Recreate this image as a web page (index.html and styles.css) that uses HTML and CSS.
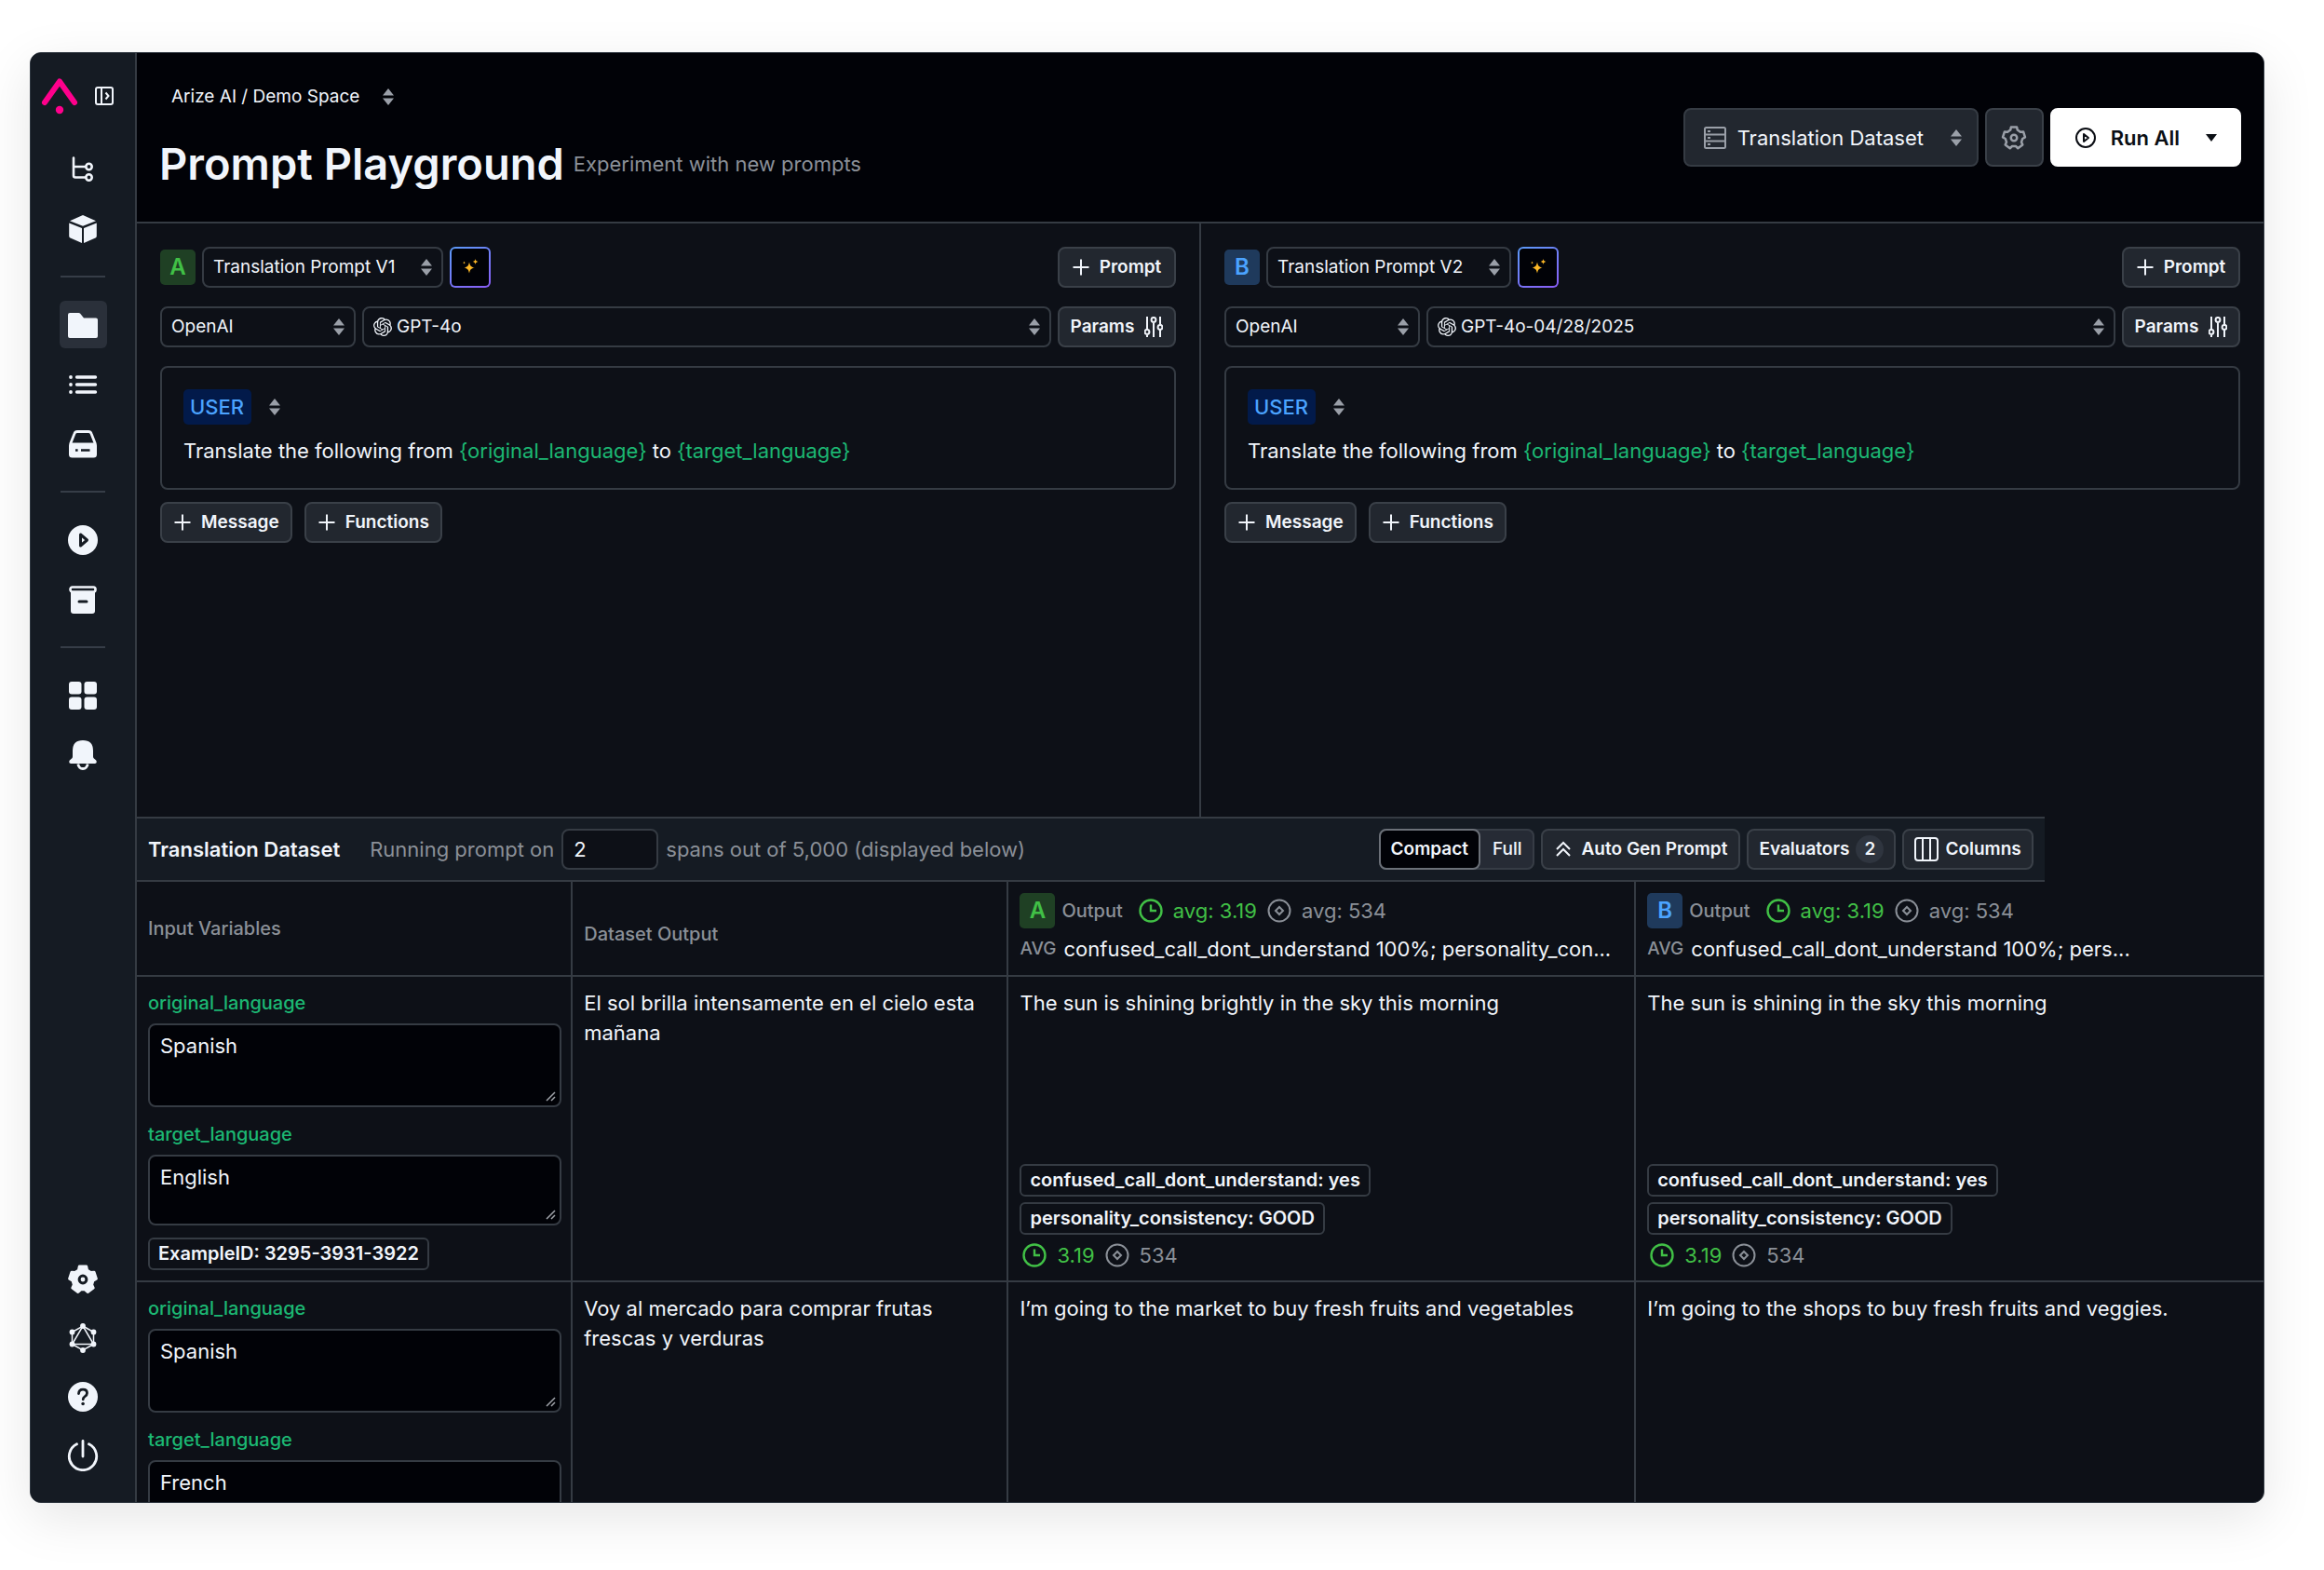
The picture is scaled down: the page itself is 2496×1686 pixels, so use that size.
FILE: index.html
```html
<!DOCTYPE html>
<html lang="en">
<head>
  <meta charset="UTF-8">
  <meta name="viewport" content="width=device-width, initial-scale=1.0">
  <title>Prompt Playground</title>
  <link rel="stylesheet" href="styles.css">
</head>
<body>
  <!-- Icon sprite -->
  <svg class="sprite" aria-hidden="true">
    <symbol id="i-sort" viewBox="0 0 12 18"><path d="M6 0l6 7.5H0zM6 18l6-7.5H0z" fill="#9a9fa8"/></symbol>
    <symbol id="i-plus" viewBox="0 0 18 18"><path d="M9 0.500v17M0.500 9h17" stroke="currentColor" stroke-width="2" fill="none"/></symbol>
    <symbol id="i-gear" viewBox="0 0 24 24">
      <path d="M9.520 2.730L14.480 2.730L15.010 5.240L17.500 7.050L20.050 6.770L21.590 11.500L19.360 12.770L18.410 15.700L19.460 18.040L15.440 20.960L13.540 19.240L10.460 19.240L8.560 20.960L4.540 18.040L5.590 15.700L4.640 12.770L2.410 11.500L3.950 6.770L6.500 7.050L8.990 5.240Z" stroke-linejoin="round"/>
      <circle class="gear-hole" cx="12" cy="12" r="2.600"/>
    </symbol>
    <symbol id="i-params" viewBox="0 0 20 22">
      <g fill="none" stroke="currentColor" stroke-width="2"><path d="M3 0v14M3 20v2M10 0v2M10 7v15M17 0v9M17 14v8"/><circle cx="3" cy="16.500" r="2.400"/><circle cx="10" cy="3.500" r="2.400"/><circle cx="17" cy="11.500" r="2.400"/></g>
    </symbol>
    <symbol id="i-sparkle" viewBox="0 0 18 18">
      <path d="M8 3.500c.8 4 2 5.200 5.500 6-3.500.8-4.700 2-5.500 6-.8-4-2-5.200-5.500-6 3.500-.8 4.700-2 5.500-6zM14.500 0c.4 2 .9 2.500 2.900 3-2 .5-2.500 1-2.900 3-.4-2-.9-2.500-2.900-3 2-.5 2.500-1 2.900-3zM2.500 2.500c.2 1 .6 1.400 1.600 1.600-1 .3-1.400.6-1.600 1.700-.2-1.100-.6-1.400-1.600-1.700 1-.2 1.400-.6 1.600-1.600z" fill="#fdb827"/>
    </symbol>
    <symbol id="i-openai" viewBox="0 0 24 24">
      <path fill="currentColor" d="M22.2819 9.8211a5.9847 5.9847 0 0 0-.5157-4.9108 6.0462 6.0462 0 0 0-6.5098-2.9A6.0651 6.0651 0 0 0 4.9807 4.1818a5.9847 5.9847 0 0 0-3.9977 2.9 6.0462 6.0462 0 0 0 .7427 7.0966 5.98 5.98 0 0 0 .511 4.9107 6.051 6.051 0 0 0 6.5146 2.9001A5.9847 5.9847 0 0 0 13.2599 24a6.0557 6.0557 0 0 0 5.7718-4.2058 5.9894 5.9894 0 0 0 3.9977-2.9001 6.0557 6.0557 0 0 0-.7475-7.0729zm-9.022 12.6081a4.4755 4.4755 0 0 1-2.8764-1.0408l.1419-.0804 4.7783-2.7582a.7948.7948 0 0 0 .3927-.6813v-6.7369l2.02 1.1686a.071.071 0 0 1 .038.052v5.5826a4.504 4.504 0 0 1-4.4945 4.4944zm-9.6607-4.1254a4.4708 4.4708 0 0 1-.5346-3.0137l.142.0852 4.783 2.7582a.7712.7712 0 0 0 .7806 0l5.8428-3.3685v2.3324a.0804.0804 0 0 1-.0332.0615L9.74 19.9502a4.4992 4.4992 0 0 1-6.1408-1.6464zM2.3408 7.8956a4.485 4.485 0 0 1 2.3655-1.9728V11.6a.7664.7664 0 0 0 .3879.6765l5.8144 3.3543-2.0201 1.1685a.0757.0757 0 0 1-.071 0l-4.8303-2.7865A4.504 4.504 0 0 1 2.3408 7.872zm16.5963 3.8558L13.1038 8.364 15.1192 7.2a.0757.0757 0 0 1 .071 0l4.8303 2.7913a4.4944 4.4944 0 0 1-.6765 8.1042v-5.6772a.79.79 0 0 0-.407-.667zm2.0107-3.0231l-.142-.0852-4.7735-2.7818a.7759.7759 0 0 0-.7854 0L9.409 9.2297V6.8974a.0662.0662 0 0 1 .0284-.0615l4.8303-2.7866a4.4992 4.4992 0 0 1 6.6802 4.66zM8.3065 12.863l-2.02-1.1638a.0804.0804 0 0 1-.038-.0567V6.0742a4.4992 4.4992 0 0 1 7.3757-3.4537l-.142.0805L8.704 5.459a.7948.7948 0 0 0-.3927.6813zm1.0976-2.3654l2.602-1.4998 2.6069 1.4998v2.9994l-2.5974 1.4997-2.6067-1.4997Z"/>
    </symbol>
    <symbol id="i-clock" viewBox="0 0 26 26"><g fill="none" stroke="currentColor" stroke-width="2.400"><circle cx="13" cy="13" r="11.500"/><path d="M13 6.500V13h6"/></g></symbol>
    <symbol id="i-token" viewBox="0 0 26 26"><g fill="none" stroke="currentColor" stroke-width="2"><circle cx="13" cy="13" r="11.500"/><path d="M13 9l4 4-4 4-4-4z"/></g></symbol>
  </svg>

  <div class="window">
    <!-- Sidebar -->
    <nav class="sidebar">
      <div class="brand">
        <svg width="40" height="40" viewBox="0 0 40 40" aria-hidden="true"><path d="M4 27L20 4.500L36 27" fill="none" stroke="#ff008c" stroke-width="6" stroke-linecap="round" stroke-linejoin="round"/><circle cx="20" cy="35" r="4.200" fill="#ff008c"/></svg>
        <button class="icon-button" aria-label="Expand sidebar">
          <svg width="20" height="20" viewBox="0 0 20 20"><g fill="none" stroke="#f1f5fb" stroke-width="2"><rect x="1" y="1" width="18" height="18" rx="2"/><path d="M7 1v18M11.500 6.500L14.500 10l-3 3.500"/></g></svg>
        </button>
      </div>
      <a class="nav-item" href="#" aria-label="Tracing"><svg width="32" height="32" viewBox="0 0 32 32"><g fill="none" stroke="#f1f5fb" stroke-width="2.600"><path d="M6 3.500V22.500q0 2 2 2h11M6 13h13" stroke-linecap="round"/><circle cx="22.500" cy="13" r="3.200"/><circle cx="22.500" cy="24.500" r="3.200"/></g></svg></a>
      <a class="nav-item" href="#" aria-label="Models"><svg width="32" height="32" viewBox="0 0 32 32"><path d="M16 1l14 6.200-14 5.600L2 7.200zM1.200 9.500L15 15v16L2.500 25.500q-1.300-.6-1.300-2zM30.800 9.500L17 15v16l12.500-5.500q1.300-.6 1.300-2z" fill="#f1f5fb"/></svg></a>
      <hr class="nav-divider">
      <a class="nav-item active" href="#" aria-label="Prompts"><svg width="32" height="32" viewBox="0 0 32 32"><path d="M2 3h9.500q1 0 1.700.7L17 8.500h13q2 0 2 2V28q0 2-2 2H2q-2 0-2-2V5q0-2 2-2z" fill="#f1f5fb"/></svg></a>
      <a class="nav-item" href="#" aria-label="Datasets"><svg width="32" height="32" viewBox="0 0 32 32"><path d="M9.500 8H29.500M9.500 16H29.500M9.500 24H29.500" stroke="#f1f5fb" stroke-width="3.400" stroke-linecap="round"/><g fill="#f1f5fb"><circle cx="3" cy="8" r="1.900"/><circle cx="3" cy="16" r="1.900"/><circle cx="3" cy="24" r="1.900"/></g></svg></a>
      <a class="nav-item" href="#" aria-label="Storage"><svg width="32" height="32" viewBox="0 0 32 32"><path d="M2.500 16L7 4.500Q7.700 2.500 10 2.500H22q2.300 0 3 2L29.500 16" fill="none" stroke="#f1f5fb" stroke-width="2.800"/><path d="M4 14.500H28q3 0 3 3V27q0 3.500-3.500 3.500H4.500Q1 30.500 1 27V17.500q0-3 3-3z" fill="#f1f5fb"/><path d="M8 22.500h2.600M14 22.500h9.500" stroke="#151b23" stroke-width="2.600"/></svg></a>
      <hr class="nav-divider">
      <a class="nav-item" href="#" aria-label="Playground"><svg width="32" height="32" viewBox="0 0 32 32"><circle cx="16" cy="16" r="16" fill="#f1f5fb"/><path d="M13.500 10L20.500 16l-7 6z" fill="none" stroke="#151b23" stroke-width="3" stroke-linejoin="round"/></svg></a>
      <a class="nav-item" href="#" aria-label="Archive"><svg width="32" height="32" viewBox="0 0 32 32"><path d="M3 8H29V28q0 3-3 3H6q-3 0-3-3z" fill="#f1f5fb"/><rect x="2.500" y="2.500" width="27" height="5" rx="2.200" fill="#151b23" stroke="#f1f5fb" stroke-width="2.600"/><path d="M12 18h8" stroke="#151b23" stroke-width="3" stroke-linecap="round"/></svg></a>
      <hr class="nav-divider">
      <a class="nav-item" href="#" aria-label="Dashboards"><svg width="32" height="32" viewBox="0 0 32 32"><g fill="#f1f5fb"><rect x="1" y="1" width="13.500" height="13.500" rx="3"/><rect x="17.500" y="1" width="13.500" height="13.500" rx="3"/><rect x="1" y="17.500" width="13.500" height="13.500" rx="3"/><rect x="17.500" y="17.500" width="13.500" height="13.500" rx="3"/></g></svg></a>
      <a class="nav-item" href="#" aria-label="Monitors"><svg width="32" height="32" viewBox="0 0 32 32"><path d="M16 0q11 0 11 11v6.500q0 1.500 1.500 2.500 2.300 1.500 2.300 3 0 2-2 2H3.200q-2 0-2-2 0-1.500 2.300-3Q5 19 5 17.500V11Q5 0 16 0z" fill="#f1f5fb"/><path d="M10.800 25.500q1 5 5.200 5t5.200-5" fill="none" stroke="#f1f5fb" stroke-width="2.800"/></svg></a>
      <div class="nav-bottom">
        <a class="nav-item" href="#" aria-label="Settings"><svg class="gear-solid" width="36" height="36"><use href="#i-gear"/></svg></a>
        <a class="nav-item" href="#" aria-label="GraphQL explorer"><svg width="32" height="32" viewBox="0 0 32 32"><g fill="none" stroke="#f1f5fb" stroke-width="1.500"><path d="M16 3l11.500 6.500v13L16 29 4.500 22.500v-13z"/><path d="M16 3l11.500 19.500h-23z"/></g><g fill="#f1f5fb"><circle cx="16" cy="3" r="2.900"/><circle cx="27.500" cy="9.500" r="2.900"/><circle cx="27.500" cy="22.500" r="2.900"/><circle cx="16" cy="29" r="2.900"/><circle cx="4.500" cy="22.500" r="2.900"/><circle cx="4.500" cy="9.500" r="2.900"/></g></svg></a>
        <a class="nav-item" href="#" aria-label="Help"><svg width="32" height="32" viewBox="0 0 32 32"><circle cx="16" cy="16" r="16" fill="#f1f5fb"/><path d="M11.500 12.500q.3-4.300 4.600-4.300 4.400 0 4.400 3.900 0 2.200-2.300 3.500-2 1.200-2 3.200" fill="none" stroke="#151b23" stroke-width="2.800" stroke-linecap="round"/><circle cx="16.100" cy="23.500" r="1.800" fill="#151b23"/></svg></a>
        <a class="nav-item" href="#" aria-label="Log out"><svg width="34" height="34" viewBox="0 0 34 34"><path d="M17 1.500V18M10.500 4.800a14.700 14.700 0 1 0 13 0" fill="none" stroke="#f1f5fb" stroke-width="2.800" stroke-linecap="round"/></svg></a>
      </div>
    </nav>

    <main class="main">
      <!-- Page header -->
      <header class="page-header">
        <div>
          <label class="picker bare space-picker">
            <select aria-label="Space"><option>Arize AI / Demo Space</option></select>
            <svg class="sort"><use href="#i-sort"/></svg>
          </label>
          <div class="title-row">
            <h1>Prompt Playground</h1>
            <span class="subtitle">Experiment with new prompts</span>
          </div>
        </div>
        <div class="header-actions">
          <label class="picker large dataset-picker">
            <svg class="lead" width="24" height="24" viewBox="0 0 24 24"><g fill="none" stroke="#9a9fa8" stroke-width="2"><rect x="1" y="1" width="22" height="22" rx="1.500"/><path d="M1 8.500h22M1 15.500h22M4 5h3M4 12h3M4 19h3"/></g></svg>
            <select aria-label="Dataset"><option>Translation Dataset</option></select>
            <svg class="sort"><use href="#i-sort"/></svg>
          </label>
          <button class="btn large square" aria-label="Playground settings"><svg class="gear-line" width="30" height="30"><use href="#i-gear"/></svg></button>
          <button class="btn large run-all">
            <svg width="24" height="24" viewBox="0 0 24 24"><g fill="none" stroke="#0b0e14" stroke-width="2"><circle cx="12" cy="12" r="10"/><path d="M10 8l5 4-5 4z" stroke-linejoin="round"/></g></svg>
            <span>Run All</span>
            <svg class="caret" width="12" height="8" viewBox="0 0 12 8"><path d="M0 0h12L6 8z" fill="#0b0e14"/></svg>
          </button>
        </div>
      </header>

      <!-- Prompt editors -->
      <div class="prompts">
        <section class="prompt">
          <div class="row">
            <span class="tag tag-a">A</span>
            <label class="picker">
              <select aria-label="Prompt A"><option>Translation Prompt V1</option></select>
              <svg class="sort"><use href="#i-sort"/></svg>
            </label>
            <button class="magic" aria-label="Optimize prompt A"><svg width="18" height="18"><use href="#i-sparkle"/></svg></button>
            <button class="btn push side"><svg width="18" height="18"><use href="#i-plus"/></svg>Prompt</button>
          </div>
          <div class="row">
            <label class="picker provider">
              <select aria-label="Provider A"><option>OpenAI</option></select>
              <svg class="sort"><use href="#i-sort"/></svg>
            </label>
            <label class="picker model">
              <svg class="lead" width="20" height="20"><use href="#i-openai"/></svg>
              <select aria-label="Model A"><option>GPT-4o</option></select>
              <svg class="sort"><use href="#i-sort"/></svg>
            </label>
            <button class="btn side">Params<svg width="20" height="22"><use href="#i-params"/></svg></button>
          </div>
          <div class="message">
            <label class="picker bare role">
              <select aria-label="Role A"><option>USER</option></select>
              <svg class="sort"><use href="#i-sort"/></svg>
            </label>
            <p>Translate the following from <span class="var">{original_language}</span> to <span class="var">{target_language}</span></p>
          </div>
          <div class="row add-row">
            <button class="btn"><svg width="18" height="18"><use href="#i-plus"/></svg>Message</button>
            <button class="btn"><svg width="18" height="18"><use href="#i-plus"/></svg>Functions</button>
          </div>
        </section>

        <section class="prompt">
          <div class="row">
            <span class="tag tag-b">B</span>
            <label class="picker">
              <select aria-label="Prompt B"><option>Translation Prompt V2</option></select>
              <svg class="sort"><use href="#i-sort"/></svg>
            </label>
            <button class="magic" aria-label="Optimize prompt B"><svg width="18" height="18"><use href="#i-sparkle"/></svg></button>
            <button class="btn push side"><svg width="18" height="18"><use href="#i-plus"/></svg>Prompt</button>
          </div>
          <div class="row">
            <label class="picker provider">
              <select aria-label="Provider B"><option>OpenAI</option></select>
              <svg class="sort"><use href="#i-sort"/></svg>
            </label>
            <label class="picker model">
              <svg class="lead" width="20" height="20"><use href="#i-openai"/></svg>
              <select aria-label="Model B"><option>GPT-4o-04/28/2025</option></select>
              <svg class="sort"><use href="#i-sort"/></svg>
            </label>
            <button class="btn side">Params<svg width="20" height="22"><use href="#i-params"/></svg></button>
          </div>
          <div class="message">
            <label class="picker bare role">
              <select aria-label="Role B"><option>USER</option></select>
              <svg class="sort"><use href="#i-sort"/></svg>
            </label>
            <p>Translate the following from <span class="var">{original_language}</span> to <span class="var">{target_language}</span></p>
          </div>
          <div class="row add-row">
            <button class="btn"><svg width="18" height="18"><use href="#i-plus"/></svg>Message</button>
            <button class="btn"><svg width="18" height="18"><use href="#i-plus"/></svg>Functions</button>
          </div>
        </section>
      </div>

      <!-- Dataset -->
      <section class="dataset">
        <div class="toolbar">
          <h2>Translation Dataset</h2>
          <label class="hint" for="span-count">Running prompt on</label>
          <input id="span-count" class="count-input" type="text" value="2">
          <span class="hint">spans out of 5,000 (displayed below)</span>
          <div class="toolbar-actions">
            <div class="segmented">
              <button class="selected" aria-pressed="true">Compact</button>
              <button aria-pressed="false">Full</button>
            </div>
            <button class="btn"><svg width="18" height="18" viewBox="0 0 18 18"><path d="M2 9l7-7 7 7M2 16l7-7 7 7" fill="none" stroke="currentColor" stroke-width="2"/></svg>Auto Gen Prompt</button>
            <button class="btn tight">Evaluators<span class="pill">2</span></button>
            <button class="btn tight"><svg width="26" height="26" viewBox="0 0 26 26"><g fill="none" stroke="currentColor" stroke-width="2"><rect x="1" y="1" width="24" height="24" rx="3"/><path d="M9 1v24M17 1v24"/></g></svg>Columns</button>
          </div>
        </div>

        <table class="grid">
          <thead>
            <tr>
              <th class="col-input">Input Variables</th>
              <th class="col-input lower">Dataset Output</th>
              <th>
                <div class="output-head">
                  <span class="tag tag-a">A</span>Output
                  <span class="metrics"><svg class="good"><use href="#i-clock"/></svg><span class="good">avg: 3.19</span><svg><use href="#i-token"/></svg><span>avg: 534</span></span>
                </div>
                <div class="output-avg">AVG<span>confused_call_dont_understand 100%; personality_con...</span></div>
              </th>
              <th>
                <div class="output-head">
                  <span class="tag tag-b">B</span>Output
                  <span class="metrics"><svg class="good"><use href="#i-clock"/></svg><span class="good">avg: 3.19</span><svg><use href="#i-token"/></svg><span>avg: 534</span></span>
                </div>
                <div class="output-avg">AVG<span>confused_call_dont_understand 100%; pers...</span></div>
              </th>
            </tr>
          </thead>
          <tbody>
            <tr>
              <td>
                <label for="orig-1">original_language</label>
                <textarea id="orig-1">Spanish</textarea>
                <label for="target-1">target_language</label>
                <textarea id="target-1" class="short">English</textarea>
                <span class="chip">ExampleID: 3295-3931-3922</span>
              </td>
              <td>El sol brilla intensamente en el cielo esta mañana</td>
              <td>
                <div class="output">The sun is shining brightly in the sky this morning</div>
                <span class="chip">confused_call_dont_understand: yes</span>
                <span class="chip">personality_consistency: GOOD</span>
                <div class="metrics"><svg class="good"><use href="#i-clock"/></svg><span class="good">3.19</span><svg><use href="#i-token"/></svg><span>534</span></div>
              </td>
              <td>
                <div class="output">The sun is shining in the sky this morning</div>
                <span class="chip">confused_call_dont_understand: yes</span>
                <span class="chip">personality_consistency: GOOD</span>
                <div class="metrics"><svg class="good"><use href="#i-clock"/></svg><span class="good">3.19</span><svg><use href="#i-token"/></svg><span>534</span></div>
              </td>
            </tr>
            <tr>
              <td>
                <label for="orig-2">original_language</label>
                <textarea id="orig-2">Spanish</textarea>
                <label for="target-2">target_language</label>
                <textarea id="target-2" class="short">French</textarea>
              </td>
              <td>Voy al mercado para comprar frutas frescas y verduras</td>
              <td><div class="output">I’m going to the market to buy fresh fruits and vegetables</div></td>
              <td><div class="output">I’m going to the shops to buy fresh fruits and veggies.</div></td>
            </tr>
          </tbody>
        </table>
      </section>
    </main>
  </div>
</body>
</html>
```

FILE: styles.css
```css
* {
  box-sizing: border-box;
}

body {
  font-family: Inter, 'Liberation Sans', sans-serif;
  font-size: 22px;
  line-height: 32px;
  color: #f1f5fb;
  background-color: #fff;
  margin: 0;
  padding: 56px 64px 72px 32px;
  height: 100vh;
}

.sprite {
  display: none;
}

svg {
  flex-shrink: 0;
}

button, select, input, textarea {
  font: inherit;
  color: inherit;
  margin: 0;
}

.window {
  display: flex;
  height: 100%;
  background-color: #0d1017;
  border: 1px solid #2f3740;
  border-radius: 12px;
  box-shadow: 0 16px 56px rgba(0, 0, 0, 0.1);
  overflow: hidden;
}

/* Sidebar */
.sidebar {
  width: 114px;
  flex-shrink: 0;
  display: flex;
  flex-direction: column;
  align-items: center;
  gap: 13px;
  padding: 26px 0 25px;
  background-color: #151b23;
  border-right: 2px solid #353b43;
}

.brand {
  display: flex;
  align-items: center;
  gap: 18px;
  height: 40px;
  margin: 0 12px 20px 0;
}

.icon-button {
  display: flex;
  padding: 0;
  border: 0;
  background: none;
}

.nav-item {
  display: flex;
  align-items: center;
  justify-content: center;
  width: 51px;
  height: 51px;
  flex-shrink: 0;
  border-radius: 6px;
}

.nav-item.active {
  background-color: #2a303a;
}

.nav-divider {
  width: 48px;
  margin: 12px 0;
  border: 0;
  border-top: 2px solid #363d47;
}

.nav-bottom {
  display: flex;
  flex-direction: column;
  gap: 12px;
  margin-top: auto;
}

.gear-solid {
  fill: #f1f5fb;
  stroke: #f1f5fb;
  stroke-width: 2px;
  --gear-hole: #151b23;
}

.gear-hole {
  stroke: var(--gear-hole);
}

.gear-line {
  fill: none;
  stroke: #9a9fa8;
  stroke-width: 2px;
  --gear-hole: #9a9fa8;
}

.main {
  flex: 1;
  min-width: 0;
  display: flex;
  flex-direction: column;
}

/* Page header */
.page-header {
  display: flex;
  justify-content: space-between;
  align-items: flex-start;
  padding: 28px 24px 27px;
  background-color: #010207;
  border-bottom: 2px solid #353b43;
}

.title-row {
  display: flex;
  align-items: center;
  gap: 10px;
  margin-top: 18px;
}

h1 {
  font-size: 47px;
  line-height: 70px;
  font-weight: 600;
  margin: 0;
}

.subtitle,
.hint {
  color: #8b9098;
}

.header-actions {
  display: flex;
  gap: 7px;
  margin-top: 31px;
}

/* Select with sort arrows */
.picker {
  position: relative;
  display: flex;
  align-items: center;
  font-size: 19px;
}

.picker select {
  appearance: none;
  width: 100%;
  height: 44px;
  padding: 0 49px 0 10px;
  background: none;
  border: 2px solid #353b43;
  border-radius: 8px;
}

.picker .sort {
  position: absolute;
  right: 12px;
  width: 12px;
  height: 18px;
  pointer-events: none;
}

.picker .lead {
  position: absolute;
  left: 12px;
}

.picker.bare {
  display: inline-flex;
}

.picker.bare .sort {
  position: static;
}

.picker.bare select {
  width: auto;
  height: 38px;
  padding: 0;
  border: 0;
}

.space-picker {
  gap: 24px;
  padding-left: 13px;
}

.picker.large {
  font-size: 22px;
}

.picker.large select {
  height: 63px;
  padding: 0 56px;
  background-color: #22272f;
}

.picker.large .lead {
  left: 22px;
}

.picker.large .sort {
  right: 18px;
}

.provider {
  width: 210px;
}

.model {
  flex: 1;
}

.model select {
  padding-left: 35px;
}

.picker.role {
  display: flex;
  gap: 19px;
  font-size: 22px;
}

.picker.role select {
  padding: 0 7px;
  font-weight: 500;
  color: #4ba3ff;
  background-color: #021a4a;
  border-radius: 5px;
}

/* Buttons */
.btn {
  display: flex;
  align-items: center;
  gap: 11px;
  height: 44px;
  padding: 0 12px 0 13px;
  font-size: 19px;
  font-weight: 600;
  white-space: nowrap;
  background-color: #22272f;
  border: 2px solid #3a4048;
  border-radius: 8px;
}

.btn.large {
  height: 63px;
  font-size: 22px;
}

.btn.square {
  width: 63px;
  padding: 0;
  justify-content: center;
}

.btn.tight {
  gap: 7px;
  padding: 0 11px;
}

.btn.side {
  width: 127px;
  padding: 0;
  justify-content: center;
}

.btn.push {
  margin-left: auto;
}

.btn.run-all {
  gap: 15px;
  padding: 0 24px;
  color: #0b0e14;
  background-color: #fff;
  border-color: #fff;
}

.run-all .caret {
  margin-left: 13px;
}

.magic {
  display: flex;
  align-items: center;
  justify-content: center;
  width: 44px;
  height: 44px;
  padding: 0;
  border: 2px solid transparent;
  border-radius: 6px;
  background: linear-gradient(#010207, #010207) padding-box, linear-gradient(150deg, #5b9bf8, #8a5cf6) border-box;
}

/* Prompt editors */
.prompts {
  flex: 13 1 0;
  min-height: 0;
  display: flex;
}

.prompt {
  flex: 1;
  padding: 25px 25px 0;
  border-right: 2px solid #353b43;
}

.prompt:last-child {
  border-right: 0;
}

.row {
  display: flex;
  align-items: center;
  gap: 7px;
  margin-bottom: 20px;
}

.add-row {
  gap: 13px;
  margin: 13px 0 0;
}

.tag {
  display: flex;
  align-items: center;
  justify-content: center;
  width: 38px;
  height: 38px;
  font-size: 24px;
  font-weight: 600;
  border-radius: 5px;
}

.tag-a {
  color: #41c046;
  background-color: #1f4024;
}

.tag-b {
  color: #4ba3ff;
  background-color: #1f3a5c;
}

.message {
  padding: 23px 23px 24px;
  border: 2px solid #353b43;
  border-radius: 8px;
}

.message p {
  margin: 12px 0 0;
}

.var {
  color: #1cb873;
}

/* Dataset toolbar */
.dataset {
  flex: 15 1 0;
  min-height: 0;
  overflow: hidden;
}

.toolbar {
  display: flex;
  align-items: center;
  width: 89.7%;
  height: 70px;
  padding: 0 12px;
  background-color: #151b23;
  border: solid #353b43;
  border-width: 2px 0;
}

h2 {
  font-size: 22px;
  font-weight: 600;
  margin: 0 32px 0 0;
}

.count-input {
  width: 104px;
  height: 44px;
  margin: 0 8px;
  padding: 0 11px;
  background-color: #0d1017;
  border: 2px solid #353b43;
  border-radius: 8px;
}

.toolbar-actions {
  display: flex;
  gap: 7px;
  margin-left: auto;
}

.segmented {
  display: flex;
  background-color: #262b35;
  border-radius: 8px;
  box-shadow: inset 0 0 0 2px #363c45;
}

.segmented button {
  height: 44px;
  padding: 0 11px;
  font-size: 19px;
  font-weight: 500;
  background: none;
  border: 2px solid transparent;
  border-radius: 8px;
}

.segmented .selected {
  font-weight: 600;
  background-color: #010207;
  border-color: #6b7078;
}

.pill {
  width: 30px;
  line-height: 30px;
  border-radius: 15px;
  text-align: center;
  background-color: #2f353f;
}

/* Dataset table */
.grid {
  width: 100%;
  table-layout: fixed;
  border-collapse: separate;
  border-spacing: 0;
}

.col-input {
  width: 20.5%;
}

.grid th,
.grid td {
  border-bottom: 2px solid #353b43;
  border-right: 2px solid #353b43;
  text-align: left;
}

.grid th:last-child,
.grid td:last-child {
  border-right: 0;
}

.grid th {
  height: 102px;
  padding: 0 12px;
  font-size: 20px;
  font-weight: 500;
  color: #8b9098;
}

.grid th.lower {
  padding-top: 12px;
}

.grid td {
  padding: 12px 12px 11px;
  vertical-align: top;
}

.grid td:first-child {
  padding-right: 10px;
}

.output-head,
.output-avg,
.metrics {
  display: flex;
  align-items: center;
}

.output-head {
  gap: 7px;
  line-height: 38px;
}

.output-head .metrics {
  margin-left: 10px;
}

.metrics {
  gap: 11px;
  font-size: 22px;
  font-weight: 400;
  color: #8b9098;
}

.metrics svg {
  width: 26px;
  height: 26px;
}

.metrics .good {
  color: #41c046;
}

.output-avg {
  gap: 8px;
  margin-top: 6px;
  font-size: 19px;
  white-space: nowrap;
}

.output-avg span {
  font-size: 22px;
  font-weight: 400;
  color: #f1f5fb;
}

.grid label {
  display: block;
  font-size: 20px;
  font-weight: 500;
  color: #1cb873;
}

.grid textarea {
  display: block;
  width: 100%;
  height: 90px;
  margin: 6px 0 13px;
  padding: 6px 11px;
  background-color: #010207;
  border: 2px solid #353b43;
  border-radius: 8px;
}

.grid textarea.short {
  height: 76px;
}

/* Resize grip */
.grid textarea::-webkit-scrollbar {
  width: 20px;
  height: 20px;
}

.grid textarea::-webkit-resizer {
  background: url("data:image/svg+xml,%3Csvg xmlns='http://www.w3.org/2000/svg' width='20' height='20'%3E%3Cpath d='M1 10l9-9M6 10l4-4' stroke='%23a0a4aa' stroke-width='1.5'/%3E%3C/svg%3E") no-repeat;
}

.chip {
  display: block;
  width: fit-content;
  padding: 0 9px;
  font-size: 20px;
  line-height: 31px;
  font-weight: 600;
  border: 2px solid #353b43;
  border-radius: 6px;
  margin-bottom: 6px;
}

.grid td:first-child .chip {
  margin-bottom: 0;
}

.output {
  min-height: 189px;
}

td .metrics {
  padding-left: 3px;
}
```
